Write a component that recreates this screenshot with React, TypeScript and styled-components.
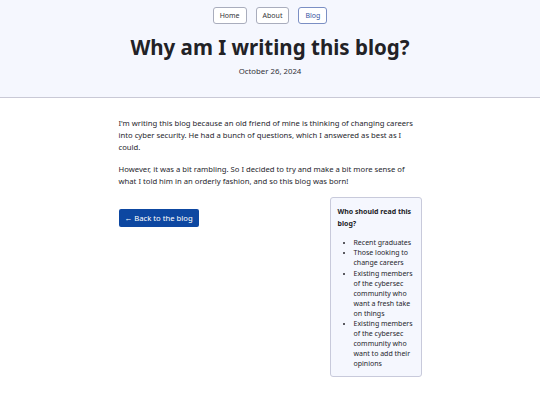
import React from "react";
import styled, { createGlobalStyle } from "styled-components";

const GlobalStyle = createGlobalStyle`
  html, body {
    margin: 0;
    padding: 0;
    background: #ffffff;
    font-family: "Noto Sans", "Open Sans", sans-serif;
    color: #222226;
  }
`;

const Header = styled.header`
  background: #f5f7fe;
  border-bottom: 1px solid #c9c9d6;
  padding: 7px 0 20px;
  display: flex;
  flex-direction: column;
  align-items: center;
`;

const Nav = styled.nav`
  display: flex;
  gap: 9px;
`;

const NavLink = styled.a<{ $active?: boolean }>`
  display: inline-flex;
  align-items: center;
  height: 15px;
  padding: 0 6px;
  border: 1px solid ${(p) => (p.$active ? "#7b8fc4" : "#a9adbd")};
  border-radius: 3px;
  background: #ffffff;
  font-size: 7px;
  color: ${(p) => (p.$active ? "#3554a0" : "#333338")};
  text-decoration: none;
`;

const Title = styled.h1`
  margin: 11px 0 0;
  font-size: 20.5px;
  line-height: 1.2;
  font-weight: 700;
  color: #222226;
`;

const DateLine = styled.div`
  margin-top: 6px;
  font-size: 7.8px;
  line-height: 1.5;
  color: #333338;
`;

const Main = styled.main`
  width: 303px;
  margin: 0 auto;
  padding-top: 19px;
`;

const Para = styled.p`
  margin: 0 0 10px;
  font-size: 7.7px;
  line-height: 12px;
  color: #26262c;
`;

const Row = styled.div`
  display: flex;
  justify-content: space-between;
  align-items: flex-start;
`;

const BackButton = styled.a`
  margin-top: 12px;
  display: inline-flex;
  align-items: center;
  height: 18px;
  padding: 0 6px;
  background: #0d47a1;
  border-radius: 2px;
  color: #ffffff;
  font-size: 7.7px;
  text-decoration: none;
`;

const Aside = styled.aside`
  width: 76px;
  padding: 8px 7px 6px;
  background: #f5f7fe;
  border: 1px solid #c8cadb;
  border-radius: 3px;
`;

const AsideTitle = styled.div`
  font-size: 7px;
  line-height: 12px;
  font-weight: 700;
  color: #222226;
`;

const List = styled.ul`
  margin: 8px 0 0;
  padding-left: 16px;
  font-size: 7px;
  line-height: 10.1px;
  color: #26262c;
`;

export default function App() {
  return (
    <>
      <GlobalStyle />
      <Header>
        <Nav>
          <NavLink href="#">Home</NavLink>
          <NavLink href="#">About</NavLink>
          <NavLink href="#" $active>
            Blog
          </NavLink>
        </Nav>
        <Title>Why am I writing this blog?</Title>
        <DateLine>October 26, 2024</DateLine>
      </Header>
      <Main>
        <Para>
          I'm writing this blog because an old friend of mine is thinking of changing careers
          into cyber security. He had a bunch of questions, which I answered as best as I
          could.
        </Para>
        <Para>
          However, it was a bit rambling. So I decided to try and make a bit more sense of
          what I told him in an orderly fashion, and so this blog was born!
        </Para>
        <Row>
          <BackButton href="#">← Back to the blog</BackButton>
          <Aside>
            <AsideTitle>Who should read this blog?</AsideTitle>
            <List>
              <li>Recent graduates</li>
              <li>Those looking to change careers</li>
              <li>Existing members of the cybersec community who want a fresh take on things</li>
              <li>Existing members of the cybersec community who want to add their opinions</li>
            </List>
          </Aside>
        </Row>
      </Main>
    </>
  );
}
